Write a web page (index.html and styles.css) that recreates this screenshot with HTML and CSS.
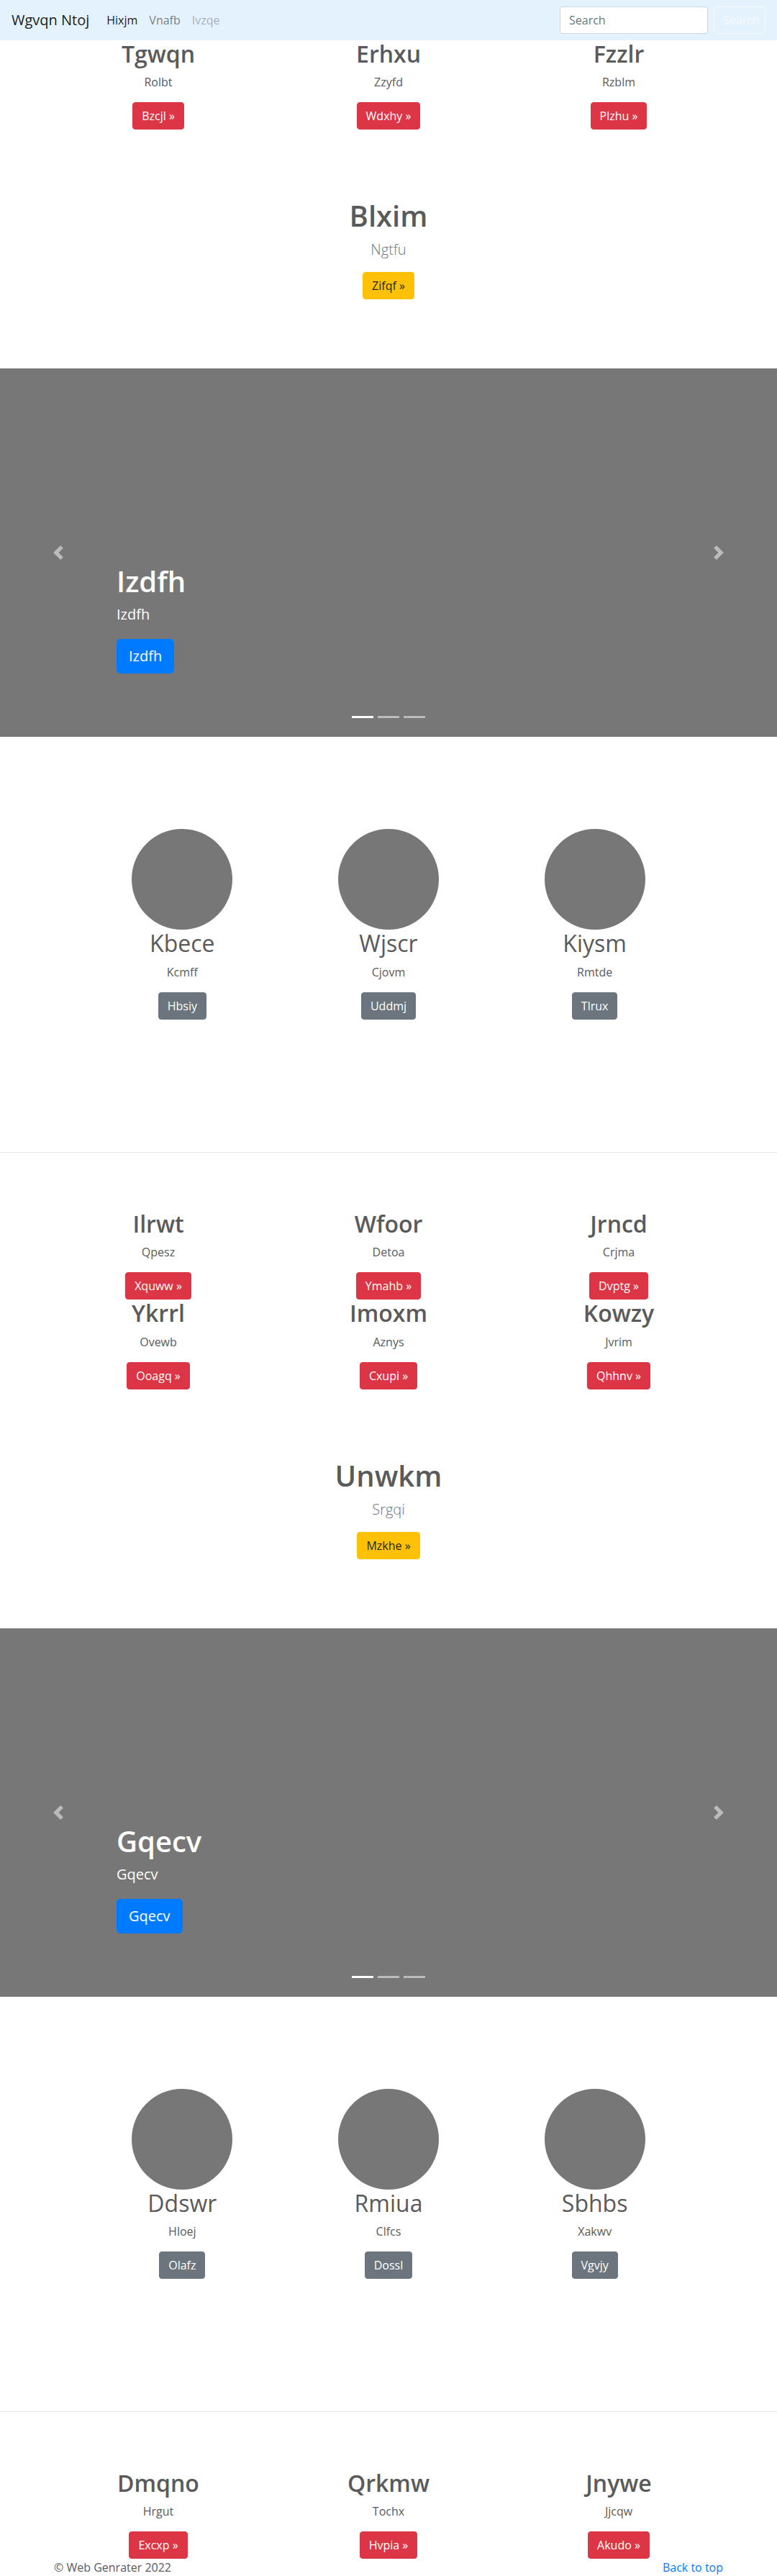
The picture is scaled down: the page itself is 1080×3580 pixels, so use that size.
FILE: index.html
```html
<!DOCTYPE html>
<html lang="en">
<head>
<meta charset="utf-8">
<title>Wgvqn Ntoj</title>
<link rel="stylesheet" href="styles.css">
</head>
<body>
<nav class="navbar">
  <a class="brand" href="#">Wgvqn Ntoj</a>
  <ul class="nav">
    <li><a class="nav-link active" href="#">Hixjm</a></li>
    <li><a class="nav-link" href="#">Vnafb</a></li>
    <li><a class="nav-link disabled" href="#">Ivzqe</a></li>
  </ul>
  <form class="search">
    <input class="search-input" type="text" placeholder="Search">
    <button class="search-btn" type="button">Search</button>
  </form>
</nav>

<main>
  <div class="container">
    <div class="row">
      <div class="col"><h2 class="title">Tgwqn</h2><p>Rolbt</p><a class="btn btn-danger" href="#">Bzcjl »</a></div>
      <div class="col"><h2 class="title">Erhxu</h2><p>Zzyfd</p><a class="btn btn-danger" href="#">Wdxhy »</a></div>
      <div class="col"><h2 class="title">Fzzlr</h2><p>Rzblm</p><a class="btn btn-danger" href="#">Plzhu »</a></div>
    </div>
  </div>

  <section class="hero">
    <h1 class="hero-title">Blxim</h1>
    <p class="lead">Ngtfu</p>
    <a class="btn btn-warning" href="#">Zifqf »</a>
  </section>

  <div class="carousel">
    <div class="slide"></div>
    <div class="caption">
      <h1 class="cap-title">Izdfh</h1>
      <p class="cap-text">Izdfh</p>
      <p class="cap-action"><a class="btn btn-lg btn-primary" href="#">Izdfh</a></p>
    </div>
    <ol class="indicators"><li class="active"></li><li></li><li></li></ol>
    <a class="ctrl prev" href="#"><svg width="20" height="20" viewBox="0 0 8 8"><path fill="#fff" d="M5.25 0l-4 4 4 4 1.5-1.5L4.25 4l2.5-2.5L5.25 0z"/></svg></a>
    <a class="ctrl next" href="#"><svg width="20" height="20" viewBox="0 0 8 8"><path fill="#fff" d="M2.75 0l-1.5 1.5L3.75 4l-2.5 2.5L2.75 8l4-4-4-4z"/></svg></a>
  </div>

  <div class="container circles">
    <div class="row">
      <div class="col"><svg class="avatar" width="140" height="140" viewBox="0 0 140 140"><circle cx="70" cy="70" r="70" fill="#777"/></svg><h2 class="name">Kbece</h2><p>Kcmff</p><a class="btn btn-secondary" href="#">Hbsiy</a></div>
      <div class="col"><svg class="avatar" width="140" height="140" viewBox="0 0 140 140"><circle cx="70" cy="70" r="70" fill="#777"/></svg><h2 class="name">Wjscr</h2><p>Cjovm</p><a class="btn btn-secondary" href="#">Uddmj</a></div>
      <div class="col"><svg class="avatar" width="140" height="140" viewBox="0 0 140 140"><circle cx="70" cy="70" r="70" fill="#777"/></svg><h2 class="name">Kiysm</h2><p>Rmtde</p><a class="btn btn-secondary" href="#">Tlrux</a></div>
    </div>
  </div>

  <hr class="divider">

  <div class="container">
    <div class="row">
      <div class="col"><h2 class="title">Ilrwt</h2><p>Qpesz</p><a class="btn btn-danger" href="#">Xquww »</a></div>
      <div class="col"><h2 class="title">Wfoor</h2><p>Detoa</p><a class="btn btn-danger" href="#">Ymahb »</a></div>
      <div class="col"><h2 class="title">Jrncd</h2><p>Crjma</p><a class="btn btn-danger" href="#">Dvptg »</a></div>
      <div class="col"><h2 class="title">Ykrrl</h2><p>Ovewb</p><a class="btn btn-danger" href="#">Ooagq »</a></div>
      <div class="col"><h2 class="title">Imoxm</h2><p>Aznys</p><a class="btn btn-danger" href="#">Cxupi »</a></div>
      <div class="col"><h2 class="title">Kowzy</h2><p>Jvrim</p><a class="btn btn-danger" href="#">Qhhnv »</a></div>
    </div>
  </div>

  <section class="hero">
    <h1 class="hero-title">Unwkm</h1>
    <p class="lead">Srgqi</p>
    <a class="btn btn-warning" href="#">Mzkhe »</a>
  </section>

  <div class="carousel">
    <div class="slide"></div>
    <div class="caption">
      <h1 class="cap-title">Gqecv</h1>
      <p class="cap-text">Gqecv</p>
      <p class="cap-action"><a class="btn btn-lg btn-primary" href="#">Gqecv</a></p>
    </div>
    <ol class="indicators"><li class="active"></li><li></li><li></li></ol>
    <a class="ctrl prev" href="#"><svg width="20" height="20" viewBox="0 0 8 8"><path fill="#fff" d="M5.25 0l-4 4 4 4 1.5-1.5L4.25 4l2.5-2.5L5.25 0z"/></svg></a>
    <a class="ctrl next" href="#"><svg width="20" height="20" viewBox="0 0 8 8"><path fill="#fff" d="M2.75 0l-1.5 1.5L3.75 4l-2.5 2.5L2.75 8l4-4-4-4z"/></svg></a>
  </div>

  <div class="container circles">
    <div class="row">
      <div class="col"><svg class="avatar" width="140" height="140" viewBox="0 0 140 140"><circle cx="70" cy="70" r="70" fill="#777"/></svg><h2 class="name">Ddswr</h2><p>Hloej</p><a class="btn btn-secondary" href="#">Olafz</a></div>
      <div class="col"><svg class="avatar" width="140" height="140" viewBox="0 0 140 140"><circle cx="70" cy="70" r="70" fill="#777"/></svg><h2 class="name">Rmiua</h2><p>Clfcs</p><a class="btn btn-secondary" href="#">Dossl</a></div>
      <div class="col"><svg class="avatar" width="140" height="140" viewBox="0 0 140 140"><circle cx="70" cy="70" r="70" fill="#777"/></svg><h2 class="name">Sbhbs</h2><p>Xakwv</p><a class="btn btn-secondary" href="#">Vgvjy</a></div>
    </div>
  </div>

  <hr class="divider">

  <div class="container">
    <div class="row">
      <div class="col"><h2 class="title">Dmqno</h2><p>Hrgut</p><a class="btn btn-danger" href="#">Excxp »</a></div>
      <div class="col"><h2 class="title">Qrkmw</h2><p>Tochx</p><a class="btn btn-danger" href="#">Hvpia »</a></div>
      <div class="col"><h2 class="title">Jnywe</h2><p>Jjcqw</p><a class="btn btn-danger" href="#">Akudo »</a></div>
    </div>
  </div>
</main>

<footer class="footer">
  <p>© Web Genrater 2022</p>
  <p><a class="top-link" href="#">Back to top</a></p>
</footer>
</body>
</html>
```

FILE: styles.css
```css
* { box-sizing: border-box; }

body {
  margin: 0;
  font-family: "Segoe UI", "Open Sans", "Noto Sans", sans-serif;
  font-size: 16px;
  line-height: 1.5;
  color: #5a5a5a;
  background: #fff;
}

p { margin: 0 0 16px; }
h1, h2 { margin: 0 0 8px; font-weight: 600; line-height: 1.2; }

/* navbar */
.navbar {
  display: flex;
  align-items: center;
  height: 56px;
  padding: 8px 16px;
  background: #e3f2fd;
}
.brand {
  font-size: 20px;
  line-height: 30px;
  padding: 5px 0;
  margin-right: 16px;
  color: rgba(0, 0, 0, .9);
  text-decoration: none;
}
.nav {
  display: flex;
  flex: 1;
  list-style: none;
  margin: 0;
  padding: 0;
}
.nav-link {
  display: block;
  padding: 8px;
  color: rgba(0, 0, 0, .5);
  text-decoration: none;
}
.nav-link.active { color: rgba(0, 0, 0, .9); }
.nav-link.disabled { color: rgba(0, 0, 0, .3); }
.search { display: flex; gap: 8px; margin: 0; }
.search-input {
  width: 206px;
  height: 38px;
  padding: 6px 12px;
  font: inherit;
  color: #495057;
  background: #fff;
  border: 1px solid #ced4da;
  border-radius: 4px;
}
.search-input::placeholder { color: #6c757d; }
.search-btn {
  width: 72px;
  height: 38px;
  padding: 6px 12px;
  font: inherit;
  color: #f8f9fa;
  background: transparent;
  border: 1px solid #f8f9fa;
  border-radius: 4px;
}

/* layout */
.container { max-width: 960px; margin: 0 auto; }
.circles { max-width: 860px; padding-bottom: 104px; }
.row { display: grid; grid-template-columns: repeat(3, 1fr); }
.col { text-align: center; padding: 0 15px; }

.title { font-size: 32px; }
.name { font-size: 32px; font-weight: 400; }
.avatar { display: block; margin: 0 auto; }

/* buttons */
.btn {
  display: inline-block;
  padding: 6px 12px;
  font-size: 16px;
  line-height: 24px;
  border: 1px solid transparent;
  border-radius: 4px;
  text-decoration: none;
  vertical-align: top;
}
.btn-lg { padding: 8px 16px; font-size: 20px; line-height: 30px; border-radius: 5px; }
.btn-danger { color: #fff; background: #dc3545; border-color: #dc3545; }
.btn-warning { color: #212529; background: #ffc107; border-color: #ffc107; }
.btn-secondary { color: #fff; background: #6c757d; border-color: #6c757d; }
.btn-primary { color: #fff; background: #007bff; border-color: #007bff; }

/* hero */
.hero { text-align: center; padding: 96px 0; }
.hero-title { font-size: 40px; }
.lead { font-size: 20px; line-height: 30px; font-weight: 300; color: #6c757d; }

/* carousel */
.carousel { position: relative; margin-bottom: 128px; }
.slide { height: 512px; background: #777; }
.caption {
  position: absolute;
  left: 15%;
  right: 15%;
  bottom: 48px;
  padding: 20px 0;
  color: #fff;
  text-align: left;
  z-index: 10;
}
.cap-title { font-size: 40px; }
.cap-text { font-size: 20px; line-height: 28px; margin-bottom: 20px; }
.cap-action { display: flex; margin: 0 0 20px; }
.indicators {
  position: absolute;
  left: 0;
  right: 0;
  bottom: 0;
  display: flex;
  justify-content: center;
  list-style: none;
  margin: 0 0 16px;
  padding: 0;
}
.indicators li {
  width: 30px;
  height: 3px;
  margin: 10px 3px;
  background: #fff;
  opacity: .5;
}
.indicators li.active { opacity: 1; }
.ctrl {
  position: absolute;
  top: 0;
  bottom: 0;
  width: 15%;
  display: flex;
  align-items: center;
  justify-content: center;
  opacity: .5;
}
.ctrl.prev { left: 0; }
.ctrl.next { right: 0; }

/* divider */
.divider {
  margin: 80px 0;
  border: 0;
  border-top: 1px solid rgba(0, 0, 0, .1);
}

/* footer */
.footer {
  max-width: 960px;
  margin: 0 auto;
  padding: 0 15px;
  display: flex;
  justify-content: space-between;
}
.top-link { color: #007bff; text-decoration: none; }
```
